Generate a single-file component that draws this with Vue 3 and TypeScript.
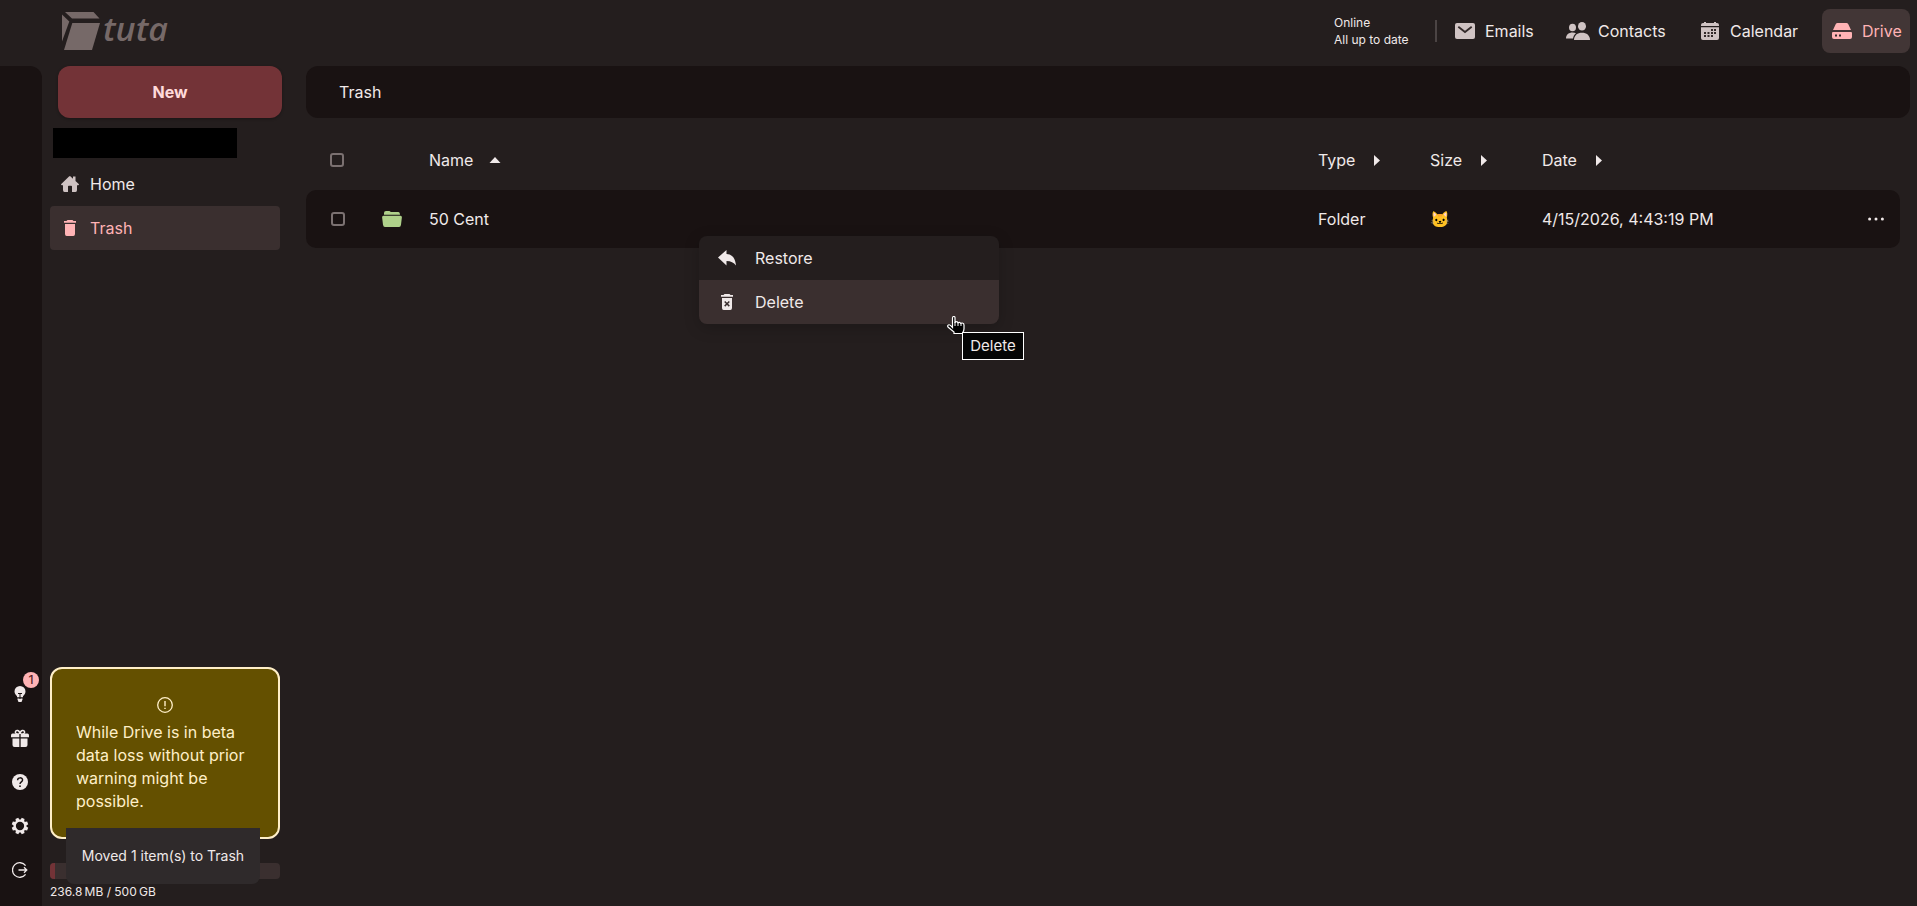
<script setup lang="ts">
import { ref } from 'vue'

interface DriveItem {
  name: string
  type: string
  size: string
  date: string
}

const navItems = [
  { id: 'emails', label: 'Emails' },
  { id: 'contacts', label: 'Contacts' },
  { id: 'calendar', label: 'Calendar' },
  { id: 'drive', label: 'Drive' }
]

const columns = [
  { id: 'type', label: 'Type' },
  { id: 'size', label: 'Size' },
  { id: 'date', label: 'Date' }
]

const items: DriveItem[] = [
  { name: '50 Cent', type: 'Folder', size: '🐱', date: '4/15/2026, 4:43:19 PM' }
]

const activeApp = ref('drive')
const activeFolder = ref('trash')
const usedPercent = 2.2
</script>

<template>
  <div class="app">
    <header class="header">
      <div class="logo">
        <svg width="120" height="52" viewBox="0 -5 120 52">
          <path d="M3 2h28.500l6 6.500H10z" />
          <path d="M0 4.500l7.300 7L0 31.500z" />
          <path d="M10.300 13H38l-8 27H2z" />
          <text x="41" y="31" textLength="65" lengthAdjust="spacingAndGlyphs">tuta</text>
        </svg>
      </div>
      <div class="status">
        <span>Online</span>
        <span>All up to date</span>
      </div>
      <div class="divider"></div>
      <nav class="nav">
        <button
          v-for="item in navItems"
          :key="item.id"
          type="button"
          :class="['nav-item', item.id, { active: activeApp === item.id }]"
          @click="activeApp = item.id"
        >
          <svg v-if="item.id === 'emails'" width="20" height="16" viewBox="0 0 20 16">
            <rect width="20" height="16" rx="2" fill="currentColor" />
            <path d="M3.300 3.700L10 9l6.700-5.300" class="cut" />
          </svg>
          <svg v-else-if="item.id === 'contacts'" width="24" height="18" viewBox="0 0 24 18" fill="currentColor">
            <ellipse cx="6.500" cy="5.500" rx="3.500" ry="3.800" />
            <ellipse cx="16" cy="4.300" rx="4" ry="4.300" />
            <path d="M0 16.500c0-4 3-6 6.500-6 1.500 0 2.600.3 3.500.8-1.600 1.300-2.700 3-3 5.200z" />
            <path d="M8 18c0-4.800 3.500-7.300 8-7.300s8 2.500 8 7.300z" />
          </svg>
          <svg v-else-if="item.id === 'calendar'" width="18" height="18" viewBox="0 0 18 18">
            <path d="M3 0h2v1h8V0h2v1h1q2 0 2 2v1H0V3q0-2 2-2h1zM0 5.300h18V16q0 2-2 2H2q-2 0-2-2z" fill="currentColor" />
            <path d="M10 8h2m1 0h2M3 11h2m1.500 0h2m1.500 0h2m1 0h2M3 14h2m1.500 0h2m1.500 0h2" class="cut" />
          </svg>
          <svg v-else width="20" height="16" viewBox="0 0 20 16">
            <path d="M5.500 0h9q1 0 1.700 1L19 7H1l2.800-6q.6-1 1.700-1zM1 9h18q1 0 1 1v4q0 2-2 2H2q-2 0-2-2v-4q0-1 1-1z" fill="currentColor" />
            <path d="M3 12.500h2m2 0h2" class="cut" />
          </svg>
          <span>{{ item.label }}</span>
        </button>
      </nav>
    </header>

    <div class="body">
      <aside class="rail">
        <button type="button" class="rail-item">
          <svg width="12" height="16" viewBox="0 0 12 16">
            <path d="M6 0a5.500 5.500 0 0 1 5.500 5.500c0 2.300-1.500 3.300-2.500 4.800v1H3v-1C2 8.800.5 7.800.5 5.500A5.500 5.500 0 0 1 6 0zM3.500 12.500h5v1l-1 2.500h-3l-1-2.500z" fill="currentColor" />
            <path d="M4 7.500h4M6 7.500V13" fill="none" stroke="#191212" />
          </svg>
          <span class="badge">1</span>
        </button>
        <button type="button" class="rail-item">
          <svg width="18" height="18" viewBox="0 0 18 18">
            <path d="M1.500 4.500h15q1.500 0 1.500 2v1.800H0V6.500q0-2 1.500-2zM1.500 9.500h15V16q0 2-2 2h-11q-2 0-2-2z" fill="currentColor" />
            <path d="M9 5C5 5.500 4 4 4.500 2.500S8.500.500 9 5zm0 0c4 .5 5-1 4.500-2.500S9.500.500 9 5z" fill="#191212" stroke="currentColor" stroke-width="1.500" />
            <path d="M9 5v13" stroke="#191212" stroke-width="1.300" />
          </svg>
        </button>
        <button type="button" class="rail-item">
          <svg width="16" height="16" viewBox="0 0 16 16">
            <circle cx="8" cy="8" r="8" fill="currentColor" />
            <path d="M5.600 6.300c0-3.300 5-3.200 5-.3C10.600 7.900 8 7.900 8 10" fill="none" stroke="#191212" stroke-width="1.400" />
            <circle cx="8" cy="12.200" r=".9" fill="#191212" />
          </svg>
        </button>
        <button type="button" class="rail-item">
          <svg class="gear" width="16" height="16" viewBox="-8 -8 16 16">
            <circle r="5.300" fill="none" stroke="currentColor" stroke-width="2.300" />
            <path
              v-for="n in 8"
              :key="n"
              d="M-2-5.500L-1.500-8.300h3L2-5.500z"
              :transform="`rotate(${n * 45 - 22.5})`"
              fill="currentColor"
            />
          </svg>
        </button>
        <button type="button" class="rail-item">
          <svg width="16" height="16" viewBox="0 0 16 16" fill="none" stroke="currentColor" stroke-width="1.300">
            <path d="M13.600 3.600a7.300 7.300 0 1 0 0 8.800" />
            <path d="M6.500 8h8.300M12 5.200L14.800 8 12 10.800" />
          </svg>
        </button>
      </aside>

      <aside class="sidebar">
        <button type="button" class="new-button">New</button>
        <div class="account"></div>
        <button
          type="button"
          :class="['folder', { active: activeFolder === 'home' }]"
          @click="activeFolder = 'home'"
        >
          <svg width="18" height="16" viewBox="0 0 18 16" fill="currentColor">
            <path d="M9 0l3 2.700V.500h2.500v4.400L18 8.300q-.2 1-1 .9h-1V14q0 2-1.500 2H11v-5.500q0-.8-.8-.8H7.800q-.8 0-.8.800V16H3.500Q2 16 2 14V9.200H1q-.9 0-1-1L8 .4z" />
          </svg>
          <span>Home</span>
        </button>
        <button
          type="button"
          :class="['folder', { active: activeFolder === 'trash' }]"
          @click="activeFolder = 'trash'"
        >
          <svg width="18" height="16" viewBox="0 0 18 16" fill="currentColor">
            <path d="M6.500 0h5l1 1H15v1.700H3V1h2.500zM4 4h10v10q0 2-1.700 2H5.700Q4 16 4 14z" />
          </svg>
          <span>Trash</span>
        </button>

        <div class="beta">
          <svg width="16" height="16" viewBox="0 0 16 16" fill="none" stroke="currentColor">
            <circle cx="8" cy="8" r="7.300" stroke-width="1.300" />
            <path d="M8 4v5.200M8 10.800v1.300" stroke-width="1.400" />
          </svg>
          <p>While Drive is in beta data loss without prior warning might be possible.</p>
        </div>
        <div class="quota">
          <div class="quota-used" :style="{ width: usedPercent + '%' }"></div>
        </div>
        <div class="quota-label">236.8&#8239;MB / 500&#8239;GB</div>
        <div class="toast">Moved 1 item(s) to Trash</div>
      </aside>

      <main class="main">
        <div class="title-bar">Trash</div>
        <div class="row table-head">
          <span class="checkbox"></span>
          <span></span>
          <span class="sort name">
            Name
            <svg width="12" height="6" viewBox="0 0 12 6"><path d="M6 0l5.500 6H.500z" fill="currentColor" /></svg>
          </span>
          <span v-for="column in columns" :key="column.id" class="sort">
            {{ column.label }}
            <svg width="6" height="11" viewBox="0 0 6 11"><path d="M0 0l6 5.500L0 11z" fill="currentColor" /></svg>
          </span>
        </div>
        <div v-for="item in items" :key="item.name" class="row table-row">
          <span class="checkbox"></span>
          <svg class="folder-icon" width="20" height="16" viewBox="0 0 20 16" fill="currentColor">
            <path d="M2 3.700V2Q2 0 4 0h3q1.200 0 1.700 1h7.800Q18 1.200 18 3.700zM1.500 4.800h17q1.500 0 1.400 1.500l-.9 7.500q-.3 2.200-2 2.200H3q-1.700 0-2-2.200L.1 6.300Q0 4.800 1.500 4.800z" />
          </svg>
          <span>{{ item.name }}</span>
          <span>{{ item.type }}</span>
          <span class="emoji">{{ item.size }}</span>
          <span>{{ item.date }}</span>
          <svg width="16" height="4" viewBox="0 0 16 4" fill="currentColor">
            <circle cx="1.600" cy="2" r="1.500" />
            <circle cx="8" cy="2" r="1.500" />
            <circle cx="14.400" cy="2" r="1.500" />
          </svg>
        </div>
      </main>
    </div>

    <div class="menu">
      <button type="button" class="menu-item">
        <svg width="18" height="16" viewBox="0 0 18 16" fill="currentColor">
          <path d="M0 7.500L8.500 0v4C14.500 4 17.500 9 18 15.500c-2.300-3-5-4.500-9.500-4.500v4.500z" />
        </svg>
        <span>Restore</span>
      </button>
      <button type="button" class="menu-item hovered">
        <svg width="18" height="16" viewBox="0 0 18 16">
          <path d="M6.500 0h5l1 1H15v1.700H3V1h2.500zM4 4h10v10q0 2-1.700 2H5.700Q4 16 4 14z" fill="currentColor" />
          <path d="M6.700 7.500l4.600 4.600m0-4.600l-4.600 4.600" stroke="#3a2f2f" stroke-width="1.500" />
        </svg>
        <span>Delete</span>
      </button>
    </div>
    <svg class="cursor" width="19" height="19" viewBox="0 0 19 19">
      <path d="M5.500 11.500V2q0-1.500 1.300-1.500T8 2v5q.3-1.500 1.500-1.300 1.300.1 1.400 1.600.2-1.200 1.500-1 1.300.2 1.400 1.600.2-1 1.500-.9Q17 7.300 17 9v3.500q0 2-1 3.500v1.500H7V16L1 11q-.8-1.200.3-2 1-.7 2.400.7z" fill="#000" stroke="#fff" stroke-width="1.200" />
      <path d="M8 6v4m3-3v3m3-2v2" stroke="#fff" />
    </svg>
    <div class="tooltip">Delete</div>
  </div>
</template>

<style>
body {
  margin: 0;
  background: #241e1e;
}
</style>

<style scoped>
.app {
  position: relative;
  display: flex;
  flex-direction: column;
  height: 100vh;
  overflow: hidden;
  background: #241e1e;
  color: #f0e9e9;
  font-family: Inter, "Liberation Sans", sans-serif;
  font-size: 16px;
}

button {
  box-sizing: border-box;
  border: none;
  background: none;
  color: inherit;
  font: inherit;
  cursor: pointer;
}

svg {
  display: block;
  flex: none;
}

.header {
  display: flex;
  align-items: center;
  box-sizing: border-box;
  height: 66px;
  padding: 0 7px 4px 62px;
}

.logo {
  margin-right: auto;
  color: #766968;
}

.logo svg {
  fill: currentColor;
}

.logo text {
  font-family: "Open Sans", sans-serif;
  font-size: 33px;
  font-style: italic;
  font-weight: 600;
}

.status {
  display: flex;
  flex-direction: column;
  width: 101px;
  font-size: 12px;
  line-height: 17px;
}

.divider {
  width: 2px;
  height: 22px;
  background: #4b4444;
}

.nav {
  display: flex;
  margin-left: 8px;
}

.nav-item {
  display: flex;
  align-items: center;
  gap: 10px;
  height: 44px;
  padding: 0 10px;
  border-radius: 8px;
  white-space: nowrap;
}

.nav-item.emails {
  width: 111px;
}

.nav-item.contacts {
  gap: 8px;
  width: 135px;
}

.nav-item.calendar {
  gap: 11px;
  width: 131px;
}

.nav-item.drive {
  width: 88px;
}

.nav-item svg {
  color: #cfc3c3;
}

.nav-item.active,
.nav-item.active svg {
  color: #ffb3b5;
}

.nav-item.active {
  background: #423636;
}

.cut {
  fill: none;
  stroke: #332a2a;
  stroke-width: 1.8;
}

.body {
  display: grid;
  grid-template-columns: 42px 248px 1fr;
  flex: 1;
  min-height: 0;
}

.rail {
  display: flex;
  flex-direction: column;
  justify-content: flex-end;
  padding-bottom: 14px;
  border-top-right-radius: 12px;
  background: #191212;
}

.rail-item {
  position: relative;
  display: flex;
  align-items: center;
  justify-content: center;
  width: 40px;
  height: 44px;
  padding: 0;
}

.gear {
  overflow: visible;
}

.badge {
  position: absolute;
  top: 0;
  left: 23px;
  width: 16px;
  height: 16px;
  border-radius: 50%;
  background: #ffb3b5;
  color: #561d22;
  font-size: 12px;
  font-weight: 500;
  line-height: 16px;
}

.sidebar {
  position: relative;
  display: flex;
  flex-direction: column;
  padding: 0 10px 0 8px;
}

.new-button {
  width: 224px;
  height: 52px;
  margin-left: 8px;
  border-radius: 12px;
  background: #733337;
  color: #ffdada;
  font-weight: 700;
  box-shadow: 0 1px 3px rgba(0, 0, 0, 0.3);
}

.account {
  width: 184px;
  height: 30px;
  margin: 10px 0 4px 3px;
  background: #000;
}

.folder {
  display: flex;
  align-items: center;
  gap: 11px;
  width: 230px;
  height: 44px;
  padding: 0 11px;
  border-radius: 4px;
}

.folder svg {
  color: #cfc3c3;
}

.folder.active {
  background: #3a2f2f;
}

.folder.active,
.folder.active svg {
  color: #ffb3b5;
}

.beta {
  display: flex;
  flex-direction: column;
  align-items: center;
  box-sizing: border-box;
  width: 230px;
  height: 172px;
  margin-top: auto;
  padding: 28px 24px 0;
  border: 2px solid #ffefc8;
  border-radius: 12px;
  background: #645000;
  color: #ffefc8;
}

.beta p {
  width: 178px;
  margin: 8px 0 0;
  line-height: 23px;
}

.quota {
  width: 230px;
  height: 16px;
  margin-top: 24px;
  overflow: hidden;
  border-radius: 4px;
  background: #3a2f2f;
}

.quota-used {
  height: 100%;
  background: #733337;
}

.quota-label {
  height: 27px;
  font-size: 12px;
  line-height: 25px;
}

.toast {
  position: absolute;
  bottom: 22px;
  left: 24px;
  width: 194px;
  height: 56px;
  border-radius: 0 0 8px 8px;
  background: #2f2a2b;
  font-size: 14px;
  line-height: 55px;
  text-align: center;
  white-space: nowrap;
}

.main {
  padding: 0 7px 0 16px;
}

.title-bar {
  height: 52px;
  margin-bottom: 12px;
  padding-left: 33px;
  border-radius: 12px;
  background: #191212;
  line-height: 52px;
}

.row {
  display: grid;
  grid-template-columns: 76px 47px 1fr 112px 112px 326px 32px;
  align-items: center;
  width: 1594px;
}

.table-head {
  height: 60px;
}

.table-row {
  height: 58px;
  border-radius: 10px;
  background: #191212;
}

.checkbox {
  box-sizing: border-box;
  width: 14px;
  height: 14px;
  margin-left: 24px;
  border: 2px solid #7b7171;
  border-radius: 3px;
}

.table-row .checkbox {
  margin-left: 25px;
}

.sort {
  display: flex;
  align-items: center;
  gap: 19px;
}

.sort.name {
  gap: 16px;
}

.folder-icon {
  color: #afd18a;
}

.emoji {
  font-family: Inter, "Noto Color Emoji", sans-serif;
}

.menu {
  position: absolute;
  top: 236px;
  left: 699px;
  width: 300px;
  overflow: hidden;
  border-radius: 8px;
  background: #241e1e;
  box-shadow: 0 4px 16px rgba(0, 0, 0, 0.2);
}

.menu-item {
  display: flex;
  align-items: center;
  gap: 19px;
  width: 100%;
  height: 44px;
  padding: 0 19px;
}

.menu-item.hovered {
  background: #3a2f2f;
}

.cursor {
  position: absolute;
  top: 316px;
  left: 947px;
}

.tooltip {
  position: absolute;
  top: 332px;
  left: 962px;
  box-sizing: border-box;
  width: 62px;
  height: 28px;
  border: 1px solid #fff;
  background: #050505;
  font-size: 15px;
  line-height: 26px;
  text-align: center;
}
</style>
